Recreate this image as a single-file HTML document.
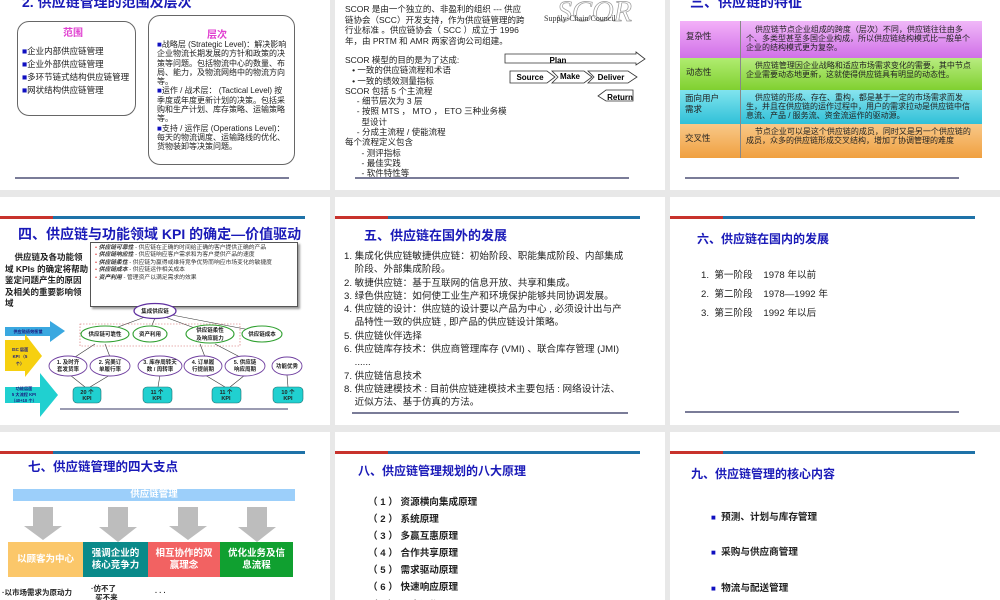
<!DOCTYPE html>
<html><head><meta charset="utf-8">
<style>
*{margin:0;padding:0;box-sizing:border-box}
body{width:1000px;height:600px;background:#e8e8e8;position:relative;overflow:hidden;font-family:"Liberation Sans","Noto Sans CJK SC",sans-serif;color:#222}
.s{position:absolute;background:#fff;overflow:hidden}
.a{position:absolute;white-space:nowrap}
.t{font-weight:bold;color:#1a1ab8;font-size:13px}
.bar{position:absolute;left:0;top:19px;height:3px;width:305px;background:#1e72a8}
.bar:before{content:"";position:absolute;left:0;top:0;width:53px;height:3px;background:#c8322c}
.ln{position:absolute;height:2px;background:#7a7c98}
</style></head><body>

<!-- Row1 col1 -->
<div class="s" style="left:0;top:0;width:330px;height:190px">
  <div class="a t" style="left:22px;top:-8px;font-size:14px">2. 供应链管理的范围及层次</div>
  <div class="a" style="left:17px;top:21px;width:119px;height:95px;border:1px solid #666;border-radius:12px"></div>
  <div class="a" style="left:63px;top:24px;font-size:10px;font-weight:bold;color:#e040d0">范围</div>
  <div class="a" style="left:22px;top:45px;font-size:8.5px;line-height:13px">
    <span style="color:#1010c0">■</span>企业内部供应链管理<br><span style="color:#1010c0">■</span>企业外部供应链管理<br><span style="color:#1010c0">■</span>多环节链式结构供应链管理<br><span style="color:#1010c0">■</span>网状结构供应链管理</div>
  <div class="a" style="left:148px;top:15px;width:147px;height:150px;border:1px solid #666;border-radius:12px"></div>
  <div class="a" style="left:207px;top:26px;font-size:10px;font-weight:bold;color:#e040d0">层次</div>
  <div class="a" style="left:157px;top:40px;font-size:8px;line-height:9.3px;white-space:normal;width:132px">
    <span style="color:#1010c0">■</span>战略层 (Strategic Level)：解决影响企业物流长期发展的方针和政策的决策等问题。包括物流中心的数量、布局、能力，及物流网络中的物流方向等。<br>
    <span style="color:#1010c0">■</span>运作 / 战术层： (Tactical Level) 按季度或年度更新计划的决策。包括采购和生产计划、库存策略、运输策略等。<br>
    <span style="color:#1010c0">■</span>支持 / 运作层 (Operations Level)：每天的物流调度、运输路线的优化、货物装卸等决策问题。</div>
  <div class="ln" style="left:15px;top:177px;width:274px"></div>
</div>

<!-- Row1 col2 -->
<div class="s" style="left:335px;top:0;width:330px;height:190px">
  <div class="a" style="left:10px;top:4px;font-size:8.5px;line-height:10.5px;white-space:normal;width:180px">SCOR 是由一个独立的、非盈利的组织 --- 供应链协会（SCC）开发支持，作为供应链管理的跨行业标准 。供应链协会（ SCC ）成立于 1996 年，由 PRTM 和 AMR 两家咨询公司组建。</div>
  <div class="a" style="left:10px;top:55px;font-size:8.5px;line-height:10.3px">SCOR  模型的目的是为了达成:<br>&nbsp;&nbsp;&nbsp;• 一致的供应链流程和术语<br>&nbsp;&nbsp;&nbsp;• 一致的绩效测量指标<br>SCOR  包括 5 个主流程<br>&nbsp;&nbsp;&nbsp;&nbsp;&nbsp;- 细节层次为 3 层<br>&nbsp;&nbsp;&nbsp;&nbsp;&nbsp;- 按照 MTS ，  MTO ，  ETO 三种业务模<br>&nbsp;&nbsp;&nbsp;&nbsp;&nbsp;&nbsp;&nbsp;型设计<br>&nbsp;&nbsp;&nbsp;&nbsp;&nbsp;- 分成主流程 / 使能流程<br>每个流程定义包含<br>&nbsp;&nbsp;&nbsp;&nbsp;&nbsp;&nbsp;&nbsp;- 测评指标<br>&nbsp;&nbsp;&nbsp;&nbsp;&nbsp;&nbsp;&nbsp;- 最佳实践<br>&nbsp;&nbsp;&nbsp;&nbsp;&nbsp;&nbsp;&nbsp;- 软件特性等</div>
  <div class="a" style="left:222px;top:-5px;font-family:'Liberation Serif',serif;font-style:italic;font-size:30px;color:#fff;-webkit-text-stroke:0.7px #999">SCOR</div>
  <div class="a" style="left:209px;top:14px;font-family:'Liberation Serif',serif;font-size:8px;color:#333">Supply-Chain Council</div>
  <svg class="a" style="left:165px;top:48px" width="150" height="60">
    <g fill="#fff" stroke="#333" stroke-width="0.8" font-family="Liberation Sans" font-weight="bold" font-size="8" text-anchor="middle">
      <path d="M5 6 H136 V4 L145 11 L136 17 V15 H5 Z"/>
      <path d="M10 23 H47 L55 29 L47 35 H10 Z"/>
      <path d="M52 23 H84 L92 29 L84 35 H52 L58 29 Z"/>
      <path d="M88 23 H128 L137 29 L128 35 H88 L94 29 Z"/>
      <path d="M98 48 L106 42 H133 V53 H106 Z"/>
      <g fill="#000" stroke="none">
        <text x="58" y="15">Plan</text><text x="30" y="32">Source</text><text x="70" y="31">Make</text><text x="111" y="32">Deliver</text><text x="120" y="52">Return</text>
      </g>
    </g>
  </svg>
  <div class="ln" style="left:20px;top:177px;width:274px"></div>
</div>

<!-- Row1 col3 -->
<div class="s" style="left:670px;top:0;width:330px;height:190px">
  <div class="a t" style="left:20px;top:-8px;font-size:14px">三、供应链的特征</div>
  <div class="a" style="left:10px;top:21px;width:60px;height:137px;font-size:8.5px">
    <div style="height:37px;background:linear-gradient(#f3b0f8,#d070e8);padding:9px 6px">复杂性</div>
    <div style="height:32px;background:linear-gradient(#b0ec70,#80d030);padding:8px 6px">动态性</div>
    <div style="height:34px;background:linear-gradient(#80e4ee,#30c0d8);padding:3px 5px;line-height:11px">面向用户<br>需求</div>
    <div style="height:34px;background:linear-gradient(#f8c888,#f0a040);padding:8px 5px">交叉性</div>
  </div>
  <div class="a" style="left:70px;top:21px;width:242px;height:137px;font-size:8px;line-height:9.2px;white-space:normal">
    <div style="height:37px;background:linear-gradient(#f0b8f8,#d070e8);padding:4px 5px;border-left:1px solid #888">&nbsp;&nbsp;&nbsp;&nbsp;供应链节点企业组成的跨度（层次）不同，供应链往往由多个、多类型甚至多国企业构成，所以供应链结构模式比一般单个企业的结构模式更为复杂。</div>
    <div style="height:32px;background:linear-gradient(#b8ec80,#80d030);padding:3px 5px;border-left:1px solid #888">&nbsp;&nbsp;&nbsp;&nbsp;供应链管理因企业战略和适应市场需求变化的需要，其中节点企业需要动态地更新，这就使得供应链具有明显的动态性。</div>
    <div style="height:34px;background:linear-gradient(#88e4ee,#30c0d8);padding:3px 5px;border-left:1px solid #888">&nbsp;&nbsp;&nbsp;&nbsp;供应链的形成、存在、重构，都是基于一定的市场需求而发生，并且在供应链的运作过程中，用户的需求拉动是供应链中信息流、产品 / 服务流、资金流运作的驱动源。</div>
    <div style="height:34px;background:linear-gradient(#f8c888,#f0a040);padding:3px 5px;border-left:1px solid #888">&nbsp;&nbsp;&nbsp;&nbsp;节点企业可以是这个供应链的成员，同时又是另一个供应链的成员，众多的供应链形成交叉结构，增加了协调管理的难度</div>
  </div>
  <div class="ln" style="left:15px;top:177px;width:274px"></div>
</div>

<!-- Row2 col1 -->
<div class="s" style="left:0;top:197px;width:330px;height:228px">
  <div class="bar"></div>
  <div class="a t" style="left:18px;top:27px;font-size:14px">四、供应链与功能领域 KPI 的确定—价值驱动</div>
  <div class="a" style="left:5px;top:55px;font-size:8.5px;font-weight:bold;line-height:11.5px">&nbsp;&nbsp;&nbsp;&nbsp;供应链及各功能领<br>域 KPIs 的确定将帮助<br>鉴定问题产生的原因<br>及相关的重要影响领<br>域</div>
  <div class="a" style="left:90px;top:45px;width:208px;height:65px;border:1px solid #555;box-shadow:2px 2px 2px #999;font-size:5.8px;line-height:7.4px;padding:2px 4px;white-space:normal;color:#333">
    <span style="color:#e04040">•</span> <b><i>供应链可靠性</i></b> - 供应链在正确的时间给正确的客户提供正确的产品<br>
    <span style="color:#e04040">•</span> <b><i>供应链响应性</i></b> - 供应链响应客户需求和为客户提供产品的速度<br>
    <span style="color:#e04040">•</span> <b><i>供应链柔性</i></b> - 供应链为赢得或维持竞争优势而响应市场变化的敏捷度<br>
    <span style="color:#e04040">•</span> <b><i>供应链成本</i></b> - 供应链运作相关成本<br>
    <span style="color:#e04040">•</span> <b><i>资产利用</i></b> - 管理资产以满足需求的效果</div>
  <svg class="a" style="left:0;top:103px" width="330" height="125" font-family="Liberation Sans,Noto Sans CJK SC" font-weight="bold" font-size="5.5" text-anchor="middle">
    <g stroke="#333" stroke-width="0.6">
      <line x1="145" y1="17" x2="110" y2="30"/><line x1="155" y1="18" x2="150" y2="30"/><line x1="165" y1="17" x2="200" y2="30"/><line x1="172" y1="15" x2="250" y2="30"/>
      <line x1="95" y1="44" x2="75" y2="57"/><line x1="105" y1="44" x2="110" y2="57"/><line x1="200" y1="44" x2="205" y2="57"/><line x1="215" y1="44" x2="240" y2="57"/>
      <line x1="70" y1="75" x2="85" y2="87"/><line x1="110" y1="75" x2="90" y2="87"/><line x1="160" y1="75" x2="158" y2="87"/><line x1="205" y1="75" x2="225" y2="87"/><line x1="245" y1="75" x2="230" y2="87"/><line x1="287" y1="75" x2="288" y2="87"/>
    </g>
    <rect x="80" y="24" width="160" height="22" fill="none" stroke="#d06060" stroke-width="0.6" stroke-dasharray="1.5 1.5"/>
    <path d="M5 27 H50 V21 L65 31 L50 42 V36 H5 Z" fill="#3aa8e0"/>
    <path d="M5 40 H25 V34 L42 56 L25 77 V71 H5 Z" fill="#f6d010"/>
    <path d="M5 87 H40 V73 L58 95 L40 117 V103 H5 Z" fill="#20d0d0"/>
    <g fill="#fff" stroke="#6030a0" stroke-width="1.3"><ellipse cx="155" cy="11" rx="21" ry="7.5"/></g>
    <g fill="#fff" stroke="#30a030" stroke-width="1.1">
      <ellipse cx="105" cy="34" rx="24" ry="8"/><ellipse cx="150" cy="34" rx="17" ry="8"/><ellipse cx="210" cy="34" rx="24" ry="9"/><ellipse cx="262" cy="34" rx="20" ry="8"/>
    </g>
    <g fill="#fff" stroke="#7040a0" stroke-width="0.9">
      <ellipse cx="68" cy="66" rx="19" ry="10"/><ellipse cx="110" cy="66" rx="20" ry="10"/><ellipse cx="160" cy="66" rx="22" ry="10"/><ellipse cx="203" cy="66" rx="19" ry="10"/><ellipse cx="245" cy="66" rx="20" ry="10"/><ellipse cx="287" cy="66" rx="15" ry="9"/>
    </g>
    <g fill="#20d0d0" stroke="#207070" stroke-width="0.6">
      <rect x="73" y="87" width="28" height="16" rx="4"/><rect x="143" y="87" width="29" height="16" rx="4"/><rect x="212" y="87" width="29" height="16" rx="4"/><rect x="273" y="87" width="30" height="16" rx="4"/>
    </g>
    <g fill="#222">
      <text x="155" y="13">集成供应链</text>
      <text x="105" y="36">供应链可靠性</text><text x="150" y="36">资产利用</text><text x="210" y="32">供应链柔性</text><text x="210" y="40">及响应能力</text><text x="262" y="36">供应链成本</text>
      <text x="68" y="64">1. 及时齐</text><text x="68" y="71">套发货率</text><text x="110" y="64">2. 完美订</text><text x="110" y="71">单履行率</text><text x="160" y="64">3. 库存周转天</text><text x="160" y="71">数 / 周转率</text><text x="203" y="64">4. 订单履</text><text x="203" y="71">行提前期</text><text x="245" y="64">5. 供应链</text><text x="245" y="71">响应周期</text><text x="287" y="68">功能优秀</text>
      <text x="87" y="94">20 个</text><text x="87" y="100">KPI</text><text x="157" y="94">11 个</text><text x="157" y="100">KPI</text><text x="226" y="94">11 个</text><text x="226" y="100">KPI</text><text x="288" y="94">10 个</text><text x="288" y="100">KPI</text>
    </g>
    <g fill="#1a1a80" font-size="4.2">
      <text x="28" y="33">供应链绩效衡量</text><text x="20" y="51">ISC 层面</text><text x="20" y="58">KPI （5</text><text x="20" y="65">个）</text>
      <text x="24" y="90">功能层面</text><text x="24" y="96">5 大流程 KPI</text><text x="24" y="102">（40+10 个）</text>
    </g>
    <line x1="60" y1="109" x2="288" y2="109" stroke="#7a7c98" stroke-width="1.5"/>
  </svg>
</div>

<!-- Row2 col2 -->
<div class="s" style="left:335px;top:197px;width:330px;height:228px">
  <div class="bar"></div>
  <div class="a t" style="left:29px;top:28px">五、供应链在国外的发展</div>
  <div class="a" style="left:9px;top:53px;font-size:9.6px;line-height:13.3px">1. 集成化供应链敏捷供应链：初始阶段、职能集成阶段、内部集成<br>&nbsp;&nbsp;&nbsp;&nbsp;阶段、外部集成阶段。<br>2. 敏捷供应链：基于互联网的信息开放、共享和集成。<br>3. 绿色供应链：如何使工业生产和环境保护能够共同协调发展。<br>4. 供应链的设计：供应链的设计要以产品为中心 , 必须设计出与产<br>&nbsp;&nbsp;&nbsp;&nbsp;品特性一致的供应链 , 即产品的供应链设计策略。<br>5. 供应链伙伴选择<br>6. 供应链库存技术：供应商管理库存 (VMI) 、联合库存管理 (JMI)<br>&nbsp;&nbsp;&nbsp;&nbsp;......<br>7. 供应链信息技术<br>8. 供应链建模技术 : 目前供应链建模技术主要包括 : 网络设计法、<br>&nbsp;&nbsp;&nbsp;&nbsp;近似方法、基于仿真的方法。</div>
  <div class="ln" style="left:17px;top:215px;width:276px"></div>
</div>

<!-- Row2 col3 -->
<div class="s" style="left:670px;top:197px;width:330px;height:228px">
  <div class="bar"></div>
  <div class="a t" style="left:27px;top:33px;font-size:12px">六、供应链在国内的发展</div>
  <div class="a" style="left:31px;top:69px;font-size:9.6px;line-height:19px">1.&nbsp;&nbsp;第一阶段&nbsp;&nbsp;&nbsp;&nbsp;1978 年以前<br>2.&nbsp;&nbsp;第二阶段&nbsp;&nbsp;&nbsp;&nbsp;1978—1992 年<br>3.&nbsp;&nbsp;第三阶段&nbsp;&nbsp;&nbsp;&nbsp;1992 年以后</div>
  <div class="ln" style="left:15px;top:214px;width:274px"></div>
</div>

<!-- Row3 col1 -->
<div class="s" style="left:0;top:432px;width:330px;height:168px">
  <div class="bar"></div>
  <div class="a t" style="left:28px;top:24px;font-size:12.5px">七、供应链管理的四大支点</div>
  <div class="a" style="left:13px;top:57px;width:282px;height:12px;background:#9ccffa;color:#fff;font-size:9.5px;font-weight:bold;text-align:center;line-height:12px">供应链管理</div>
  <svg class="a" style="left:0;top:75px" width="330" height="35">
    <g fill="#bdbdbd">
      <path d="M33 0H53V19H62L43 33L24 19H33Z"/><path d="M108 0H128V20H137L118 35L99 20H108Z"/><path d="M178 0H198V19H207L188 33L169 19H178Z"/><path d="M247 0H267V20H276L257 35L238 20H247Z"/>
    </g>
  </svg>
  <div class="a" style="left:8px;top:110px;width:75px;height:35px;background:#fbc76a;color:#fff;font-size:9.5px;font-weight:bold;text-align:center;line-height:35px">以顾客为中心</div>
  <div class="a" style="left:83px;top:110px;width:65px;height:35px;background:#0a8a8a;color:#fff;font-size:9.5px;font-weight:bold;text-align:center;line-height:12px;padding-top:6px">强调企业的<br>核心竞争力</div>
  <div class="a" style="left:148px;top:110px;width:72px;height:35px;background:#f26262;color:#fff;font-size:9.5px;font-weight:bold;text-align:center;line-height:12px;padding-top:6px">相互协作的双<br>赢理念</div>
  <div class="a" style="left:220px;top:110px;width:73px;height:35px;background:#10a030;color:#fff;font-size:9.5px;font-weight:bold;text-align:center;line-height:12px;padding-top:6px">优化业务及信<br>息流程</div>
  <div class="a" style="left:2px;top:155px;font-size:7.5px;font-weight:bold">·以市场需求为原动力</div>
  <div class="a" style="left:91px;top:152px;font-size:7.5px;font-weight:bold;line-height:9px">·仿不了<br>&nbsp;&nbsp;买不来</div>
  <div class="a" style="left:155px;top:158px;font-size:7px;font-weight:bold">· · ·</div>
</div>

<!-- Row3 col2 -->
<div class="s" style="left:335px;top:432px;width:330px;height:168px">
  <div class="bar"></div>
  <div class="a t" style="left:23px;top:30px;font-size:12px">八、供应链管理规划的八大原理</div>
  <div class="a" style="left:33px;top:62px;font-size:9.6px;font-weight:bold;line-height:17.1px">（ 1 ） 资源横向集成原理<br>（ 2 ） 系统原理<br>（ 3 ） 多赢互惠原理<br>（ 4 ） 合作共享原理<br>（ 5 ） 需求驱动原理<br>（ 6 ） 快速响应原理<br>（ 7 ） 同步运作原理</div>
</div>

<!-- Row3 col3 -->
<div class="s" style="left:670px;top:432px;width:330px;height:168px">
  <div class="bar"></div>
  <div class="a t" style="left:21px;top:33px;font-size:12px">九、供应链管理的核心内容</div>
  <div class="a" style="left:41px;top:68px;font-size:9.6px;font-weight:bold;line-height:35.3px"><span style="color:#1010c0;font-size:8px">■</span>&nbsp;&nbsp;预测、计划与库存管理<br><span style="color:#1010c0;font-size:8px">■</span>&nbsp;&nbsp;采购与供应商管理<br><span style="color:#1010c0;font-size:8px">■</span>&nbsp;&nbsp;物流与配送管理</div>
</div>

</body></html>
